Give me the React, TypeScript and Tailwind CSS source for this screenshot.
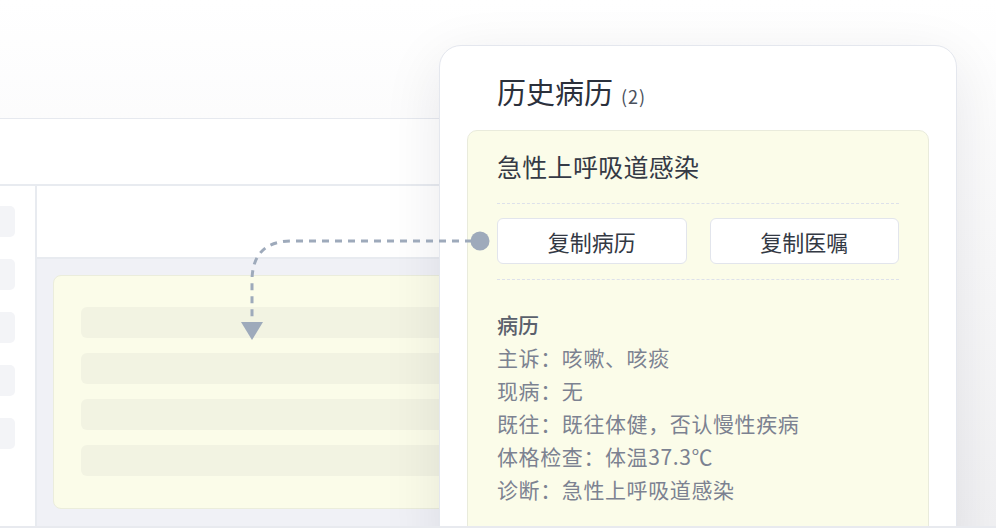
const rows = [0, 1, 2, 3];
const sideItems = [0, 1, 2, 3, 4];

const record = [
  "主诉：咳嗽、咳痰",
  "现病：无",
  "既往：既往体健，否认慢性疾病",
  "体格检查：体温37.3℃",
  "诊断：急性上呼吸道感染",
];

function Backdrop() {
  return (
    <div className="flex h-full w-[720px] flex-col">
      <div className="h-[118px] shrink-0" />
      <div className="flex flex-1 flex-col border-t border-[#e6e9ef] bg-white">
        <div className="h-[67px] shrink-0 border-b-2 border-[#e8ebf0]" />
        <div className="flex flex-1">
          <aside className="flex w-[37px] shrink-0 flex-col gap-[22px] border-r-2 border-[#e8ebf0] pt-[20px]">
            {sideItems.map((i) => (
              <div key={i} className="h-[31px] w-[15px] rounded-r-[5px] bg-[#f3f4f7]" />
            ))}
          </aside>
          <main className="flex flex-1 flex-col">
            <div className="h-[73px] shrink-0 border-b-2 border-[#e8ebf0]" />
            <div className="flex-1 bg-[#f0f1f6] pl-[16px] pt-[16px]">
              <div className="flex h-[234px] flex-col gap-[15px] rounded-[8px] border border-[#ebeddc] bg-[#fbfce9] pl-[27px] pt-[31px]">
                {rows.map((i) => (
                  <div key={i} className="h-[31px] rounded-[6px] bg-[#f2f3e2]" />
                ))}
              </div>
            </div>
          </main>
        </div>
      </div>
    </div>
  );
}

function Connector() {
  return (
    <svg className="absolute left-0 top-0" width="996" height="526" viewBox="0 0 996 526" fill="none">
      <path
        d="M472 241 H292 Q252 241 252 281 V320"
        stroke="#9eaabb"
        strokeWidth="3"
        strokeDasharray="7 6"
      />
      <polygon points="241,322 263,322 252,340" fill="#9eaabb" />
      <circle cx="480" cy="241" r="9.5" fill="#9eaabb" />
    </svg>
  );
}

function HistoryCard() {
  return (
    <section className="absolute left-[439px] top-[45px] h-[520px] w-[518px] rounded-[22px] border border-[#e4e7ee] bg-white shadow-[0_16px_60px_rgba(15,23,42,0.09)]">
      <h2 className="h-[66px] pl-[57px] pt-[25px] text-[29px] leading-[40px] text-[#2b303b]">
        历史病历
        <span className="ml-[8px] text-[18px] leading-[40px] tracking-[1px] text-[#4a505c]">(2)</span>
      </h2>
      <div className="mx-[27px] mt-[18px] h-[420px] rounded-[10px] border border-[#e9ebdc] bg-[#fbfce9] px-[29px] pt-[17px]">
        <h3 className="text-[25px] leading-[36px] tracking-[0.3px] text-[#353a45]">急性上呼吸道感染</h3>
        <div className="mt-[19px] border-t border-dashed border-[#dde1ea] pt-[14px]">
          <div className="grid grid-cols-2 gap-[23px]">
            <button className="h-[46px] rounded-[6px] border border-[#e2e5ec] bg-white text-[22px] text-[#333944]">
              复制病历
            </button>
            <button className="h-[46px] rounded-[6px] border border-[#e2e5ec] bg-white text-[22px] text-[#333944]">
              复制医嘱
            </button>
          </div>
        </div>
        <div className="mt-[15px] border-t border-dashed border-[#dde1ea] pt-[27px]">
          <div className="text-[21px] font-medium leading-[34px] text-[#5a606c]">病历</div>
          {record.map((line) => (
            <p key={line} className="text-[21px] leading-[33px] tracking-[0.6px] text-[#7c8291]">
              {line}
            </p>
          ))}
        </div>
      </div>
    </section>
  );
}

export default function App() {
  return (
    <div className="flex h-[528px] w-[996px] flex-col font-['Noto_Sans_CJK_SC','Noto_Sans',sans-serif]">
      <div className="relative h-[526px] overflow-hidden bg-gradient-to-b from-white to-[#f1f1f3]">
        <Backdrop />
        <HistoryCard />
        <Connector />
      </div>
      <div className="h-[2px] bg-[#e8eaef]" />
    </div>
  );
}
